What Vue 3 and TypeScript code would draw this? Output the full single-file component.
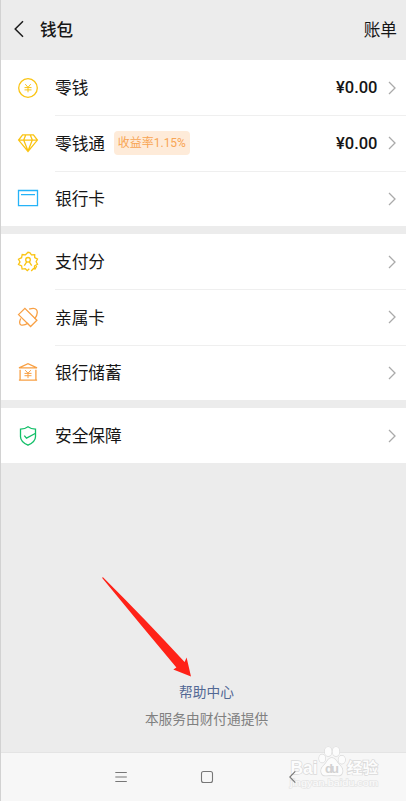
<script setup lang="ts">
type IconName = 'coin' | 'diamond' | 'card' | 'score' | 'family' | 'bank' | 'shield'

interface WalletItem {
  label: string
  icon: IconName
  amount?: string
  badge?: string
}

const groups: WalletItem[][] = [
  [
    { label: '零钱', icon: 'coin', amount: '¥0.00' },
    { label: '零钱通', icon: 'diamond', amount: '¥0.00', badge: '收益率1.15%' },
    { label: '银行卡', icon: 'card' },
  ],
  [
    { label: '支付分', icon: 'score' },
    { label: '亲属卡', icon: 'family' },
    { label: '银行储蓄', icon: 'bank' },
  ],
  [{ label: '安全保障', icon: 'shield' }],
]
</script>

<template>
  <div class="screen">
    <header class="header">
      <svg class="back" viewBox="0 0 10 18"><path d="M9 1.2 1.2 9 9 16.8" /></svg>
      <h1 class="title">钱包</h1>
      <span class="bill">账单</span>
    </header>

    <main class="groups">
      <section v-for="(group, g) in groups" :key="g" class="group">
        <div v-for="item in group" :key="item.label" class="row">
          <svg class="icon" :class="item.icon" viewBox="0 0 22 22">
            <template v-if="item.icon === 'coin'">
              <circle cx="11" cy="11" r="9.3" />
              <path class="yen" d="M8.3 7.2 11 10.4l2.7-3.2M11 10.4v4.9M7.5 10.6h7M7.5 12.9h7" />
            </template>
            <template v-else-if="item.icon === 'diamond'">
              <path d="M5.6 2.9h10.8l4 5.2L11 19.4 1.6 8.1zM1.6 8.1h18.8M6.7 8.1 11 19l4.3-10.9M6.7 8.1 8.7 3M15.3 8.1 13.3 3" />
            </template>
            <template v-else-if="item.icon === 'card'">
              <path d="M1.5 3.5h19v15.2h-19zM4 7.6h14" />
            </template>
            <template v-else-if="item.icon === 'score'">
              <path d="M17.4 17.3v-1.4l.4-1.2 2.7-1.5-1.4-2.5 1.4-2.6-2.8-1.4v-3l-3.2.2L12.8 1.6 11 1.3 8.5 3.8 5.2 3.5 4.6 6.7 1.5 8.2 3 10.9l-1.5 2.6 3.1 1.4.5 3.2 3.2-.4 2 2 2-2M14.2 20l2.1-2.3 1.8.3 1.6-3" />
              <circle cx="11" cy="8.8" r="2.3" />
              <path d="M9.7 10.8 7.3 14.6M12.3 10.8l2.4 3.8" />
            </template>
            <template v-else-if="item.icon === 'family'">
              <path d="m1.5 8.6 6.4-6.3 12 12-6.3 6.2z" />
              <path d="M12.1 3.2c3.2-1.2 6.2-1 7.3.5 1.7 2.3.5 6-1.7 9.3M3.7 12.5c-1.5 3.5-1.3 5.9.2 6.4 2 .6 4.8-.2 7.3-1.8" />
            </template>
            <template v-else-if="item.icon === 'bank'">
              <path d="M2 6.9 11 2.6l9 4.3zM3.1 8.8v9.8M18.9 8.8v9.8M1.9 19.1h18.2" />
              <path class="yen" d="m8.2 9.2 2.8 3 2.8-3M11 12.2v4.9M7.5 12.4h7M7.5 14.7h7" />
            </template>
            <template v-else>
              <path d="M11 1.7c2.2 1.7 4.5 2.3 7.5 2.5v7.5c0 3.6-3.3 6.5-7.5 8.5-4.2-2-7.5-4.9-7.5-8.5V4.2c3-.2 5.3-.8 7.5-2.5z" />
              <path d="m7.3 10.6 2.2 2.5 8.7-4.6" />
            </template>
          </svg>
          <div class="content">
            <span class="label">{{ item.label }}</span>
            <span v-if="item.badge" class="badge">{{ item.badge }}</span>
            <span v-if="item.amount" class="amount">{{ item.amount }}</span>
            <svg class="chevron" viewBox="0 0 8 14"><path d="m1 1 6 6-6 6" /></svg>
          </div>
        </div>
      </section>
    </main>

    <footer class="footer">
      <a class="help">帮助中心</a>
      <span class="provider">本服务由财付通提供</span>
    </footer>

    <nav class="nav">
      <svg class="key" viewBox="0 0 14 14"><path d="M1.3 2.5h11.5M1.3 7h11.5M1.3 11.5h11.5" /></svg>
      <svg class="key" viewBox="0 0 14 14"><rect x="1.5" y="1.5" width="11" height="11" rx="2" /></svg>
      <svg class="key front" viewBox="0 0 14 14"><path d="M10.3 1.3 4.8 7l5.5 5.7" /></svg>
    </nav>

    <svg class="pointer" viewBox="0 0 92 101">
      <path d="M1 .8 2 .2Q45 43 83.6 85L85.6 80.6 90 99.6 72.3 92.4 75.4 90.4Q38 46 1 .8z" />
    </svg>

    <svg class="watermark" viewBox="0 0 94 46">
      <g class="paw">
        <ellipse cx="35.2" cy="15.5" rx="3.1" ry="4" />
        <ellipse cx="41.2" cy="8.6" rx="3.4" ry="4.5" />
        <ellipse cx="49" cy="8.6" rx="3.4" ry="4.5" />
        <ellipse cx="54.8" cy="16.8" rx="3.3" ry="4" />
        <path d="M44.8 15c-4 0-4.6 4.5-8 7.6-4.6 4.1-2.9 10.4 2.3 10 3.6-.3 7.8-.3 11.4 0 5.4.4 6.8-5.9 2.5-10-3.4-3.1-4.2-7.6-8.2-7.6z" />
      </g>
      <text class="brand" x="3.5" y="30.5" textLength="27" lengthAdjust="spacingAndGlyphs">Bai</text>
      <text class="du" x="38" y="29.5" textLength="14">du</text>
      <text class="cn" x="60" y="29.5" textLength="31" lengthAdjust="spacingAndGlyphs">经验</text>
      <text class="domain" x="3" y="43.2" textLength="88" lengthAdjust="spacingAndGlyphs">jingyan.baidu.com</text>
    </svg>
  </div>
</template>

<style>
body {
  margin: 0;
}
</style>

<style scoped>
.screen {
  position: relative;
  box-sizing: border-box;
  width: 100%;
  height: 801px;
  display: flex;
  flex-direction: column;
  overflow: hidden;
  border-left: 1px solid #d2d2d2;
  background: #ececec;
  color: #161616;
  font-family: 'Noto Sans CJK SC', sans-serif;
  font-size: 16.7px;
}

svg {
  flex: none;
  fill: none;
}

.header {
  display: flex;
  align-items: center;
  height: 60px;
  box-sizing: border-box;
  padding: 0 9px 3px 13px;
}

.back {
  width: 10px;
  height: 18px;
  stroke: #1c1c1c;
  stroke-width: 1.5;
}

.title {
  margin: 0 0 0 16px;
  font-size: 16.6px;
  font-weight: 500;
}

.bill {
  margin-left: auto;
}

.groups {
  display: flex;
  flex-direction: column;
  gap: 8px;
}

.group {
  background: #fff;
}

.row {
  display: flex;
  align-items: center;
  height: 55.33px;
  padding-left: 15.5px;
}

.icon {
  width: 22px;
  height: 22px;
  margin-right: 16.5px;
  stroke-width: 1.3;
}

.yen {
  stroke-width: 1;
}

.coin,
.diamond,
.score {
  stroke: #fac413;
}

.card {
  stroke: #25b3f8;
}

.family,
.bank {
  stroke: #f8a044;
}

.shield {
  stroke: #13bf68;
}

.content {
  flex: 1;
  display: flex;
  align-items: center;
  box-sizing: border-box;
  height: 100%;
  padding-right: 10px;
}

.row + .row .content {
  border-top: 1px solid #efefef;
}

.label {
  padding-bottom: 1.5px;
}

.badge {
  margin-left: 8.5px;
  box-sizing: border-box;
  width: 76.5px;
  height: 24px;
  border-radius: 4px;
  background: #feebd9;
  color: #f8a554;
  font-family: Roboto, 'Noto Sans CJK SC', sans-serif;
  font-size: 12px;
  line-height: 24px;
  text-align: center;
  white-space: nowrap;
}

.amount {
  margin-left: auto;
  font-family: Roboto, sans-serif;
  font-size: 16.5px;
  font-weight: 500;
}

.chevron {
  width: 8px;
  height: 14px;
  margin-left: auto;
  stroke: #aaa;
  stroke-width: 1.3;
}

.amount + .chevron {
  margin-left: 10.5px;
}

.footer {
  flex: 1;
  display: flex;
  flex-direction: column;
  justify-content: flex-end;
  align-items: center;
  gap: 7px;
  padding: 0 0 24px 6px;
  color: #808080;
  font-size: 13.7px;
  line-height: 20px;
}

.help {
  color: #526894;
}

.nav {
  display: flex;
  justify-content: space-between;
  align-items: center;
  box-sizing: border-box;
  height: 49px;
  padding: 0 107px 1px 113px;
  border-top: 1px solid #e4e4e4;
  background: #f7f7f7;
}

.key {
  width: 14px;
  height: 14px;
  stroke: #777;
  stroke-width: 1.1;
}

.front {
  position: relative;
  z-index: 1;
}

.pointer {
  position: absolute;
  left: 100px;
  top: 577px;
  width: 92px;
  height: 101px;
  fill: #ff2218;
}

.watermark {
  position: absolute;
  left: 286px;
  top: 743px;
  width: 94px;
  height: 46px;
  fill: #fcfcfc;
  stroke: #dadada;
  stroke-width: 1.4;
  paint-order: stroke;
  font-family: 'Liberation Sans', sans-serif;
  font-weight: 700;
}

.brand {
  font-size: 18px;
}

.cn {
  font-family: 'Noto Sans CJK SC', sans-serif;
  font-size: 15px;
}

.du {
  font-size: 13px;
  fill: #d2d2d2;
  stroke: none;
}

.domain {
  font-size: 9px;
  font-weight: 400;
  stroke: #e6e6e6;
}
</style>
